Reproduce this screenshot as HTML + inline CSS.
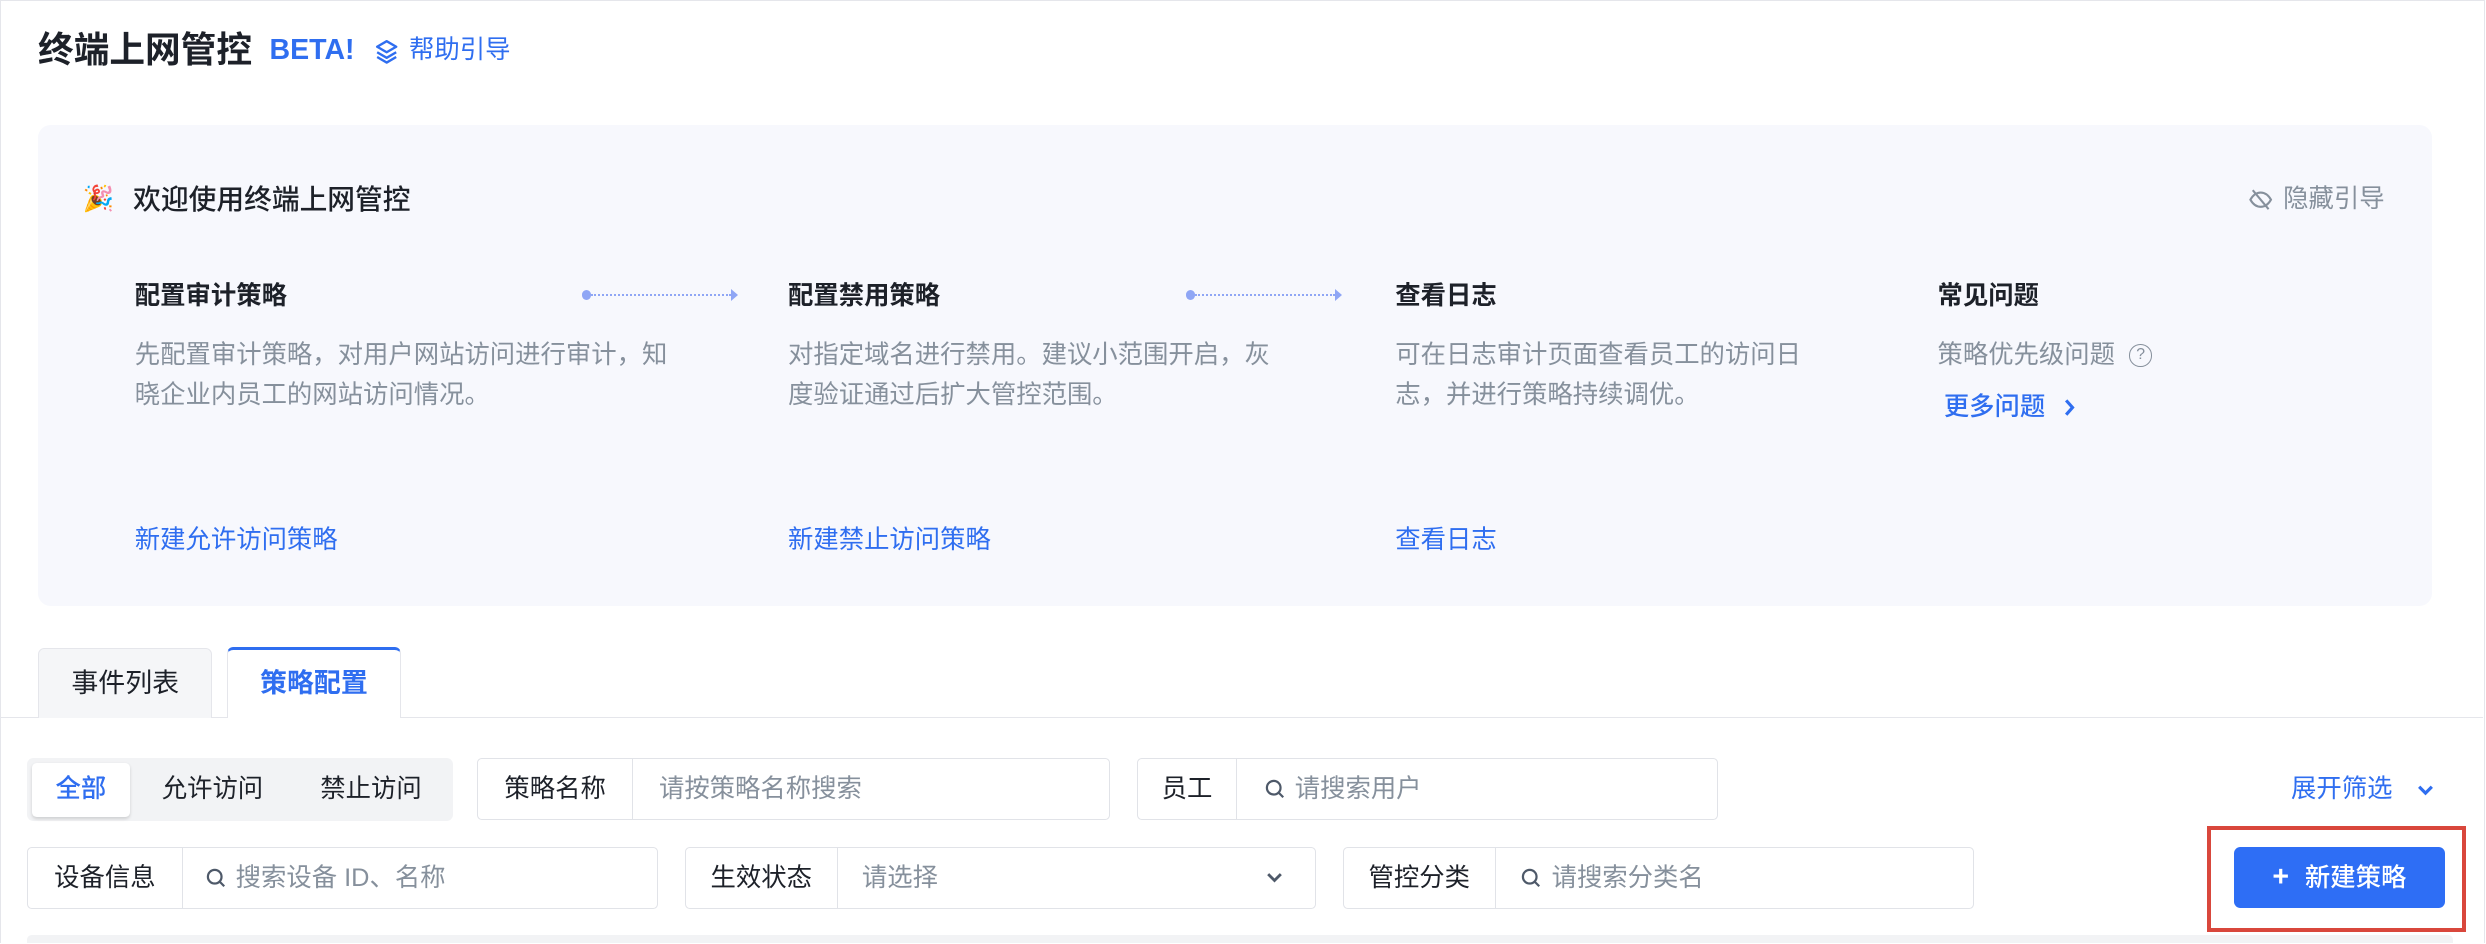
<!DOCTYPE html>
<html><head><meta charset="utf-8"><style>
html,body{margin:0;padding:0;background:#fff;}
body{width:2486px;height:944px;overflow:hidden;}
#r{zoom:1.5855;width:1568px;height:595px;position:relative;font-family:"Liberation Sans","Noto Sans CJK SC",sans-serif;color:#1d2129;}
.a{position:absolute;white-space:nowrap;line-height:20px;}
.blue{color:#2f6ef0;}
.gray{color:#86909c;}
.desc{font-size:16px;color:#86909c;line-height:25px;}
.h{font-size:16px;font-weight:bold;color:#1d2129;}
.lk{font-size:16px;color:#2f6ef0;}
.dot{position:absolute;height:0;border-top:1.5px dotted #8fa6f5;}
.box{position:absolute;border:1px solid #e1e3e8;border-radius:3px;background:#fff;height:38px;}
.box .l{position:absolute;left:0;top:0;height:38px;line-height:38px;font-size:16px;color:#1d2129;text-align:center;border-right:1px solid #e1e3e8;}
.box .p{position:absolute;top:0;height:38px;line-height:38px;font-size:16px;color:#86909c;white-space:nowrap;}
.box svg{vertical-align:-2px;margin-right:6px;}
</style></head><body><div id="r">
<div class="a" style="left:0;top:0;width:1566px;height:594px;border:1px solid #e5e6eb;border-bottom:none;"></div>
<div class="a" style="left:24px;top:19px;font-size:22.5px;line-height:26px;font-weight:bold;">终端上网管控</div>
<div class="a blue" style="left:170px;top:22px;font-size:18px;font-weight:bold;">BETA!</div>
<svg class="a" style="left:236px;top:24px" width="16" height="17" viewBox="0 0 16 17"><path d="M8 2 L14 5.5 L8 9 L2 5.5 Z M2 9 L8 12.5 L14 9 M2 12 L8 15.5 L14 12" fill="none" stroke="#2f6ef0" stroke-width="1.5" stroke-linejoin="round"/></svg>
<div class="a blue" style="left:258px;top:22px;font-size:16px;">帮助引导</div>

<div class="a" style="left:24px;top:79px;width:1510px;height:303px;background:#f7f8fd;border-radius:8px;"></div>
<div class="a" style="left:52px;top:116px;font-size:16px;">🎉</div>
<div class="a" style="left:84px;top:116px;font-size:17.5px;font-weight:500;">欢迎使用终端上网管控</div>
<svg class="a" style="left:1418px;top:118px" width="16" height="16" viewBox="0 0 16 16"><path d="M1.5 8 C3.5 4.5 6 3.5 8 3.5 C10 3.5 12.5 4.5 14.5 8 C12.5 11.5 10 12.5 8 12.5 C6 12.5 3.5 11.5 1.5 8 Z M3 2 L13 14" fill="none" stroke="#86909c" stroke-width="1.3"/></svg>
<div class="a gray" style="left:1440px;top:116px;font-size:16px;">隐藏引导</div>

<div class="a h" style="left:85px;top:177px;">配置审计策略</div>
<div class="a desc" style="left:85px;top:212px;">先配置审计策略，对用户网站访问进行审计，知<br>晓企业内员工的网站访问情况。</div>
<div class="a lk" style="left:85px;top:331px;">新建允许访问策略</div>
<div class="a" style="left:367px;top:183px;width:6px;height:6px;border-radius:3px;background:#8fa6f5;"></div>
<div class="dot" style="left:373px;top:185.5px;width:88px;"></div>
<div class="a" style="left:461px;top:182px;border-left:5px solid #8fa6f5;border-top:4px solid transparent;border-bottom:4px solid transparent;"></div>

<div class="a h" style="left:497px;top:177px;">配置禁用策略</div>
<div class="a desc" style="left:497px;top:212px;">对指定域名进行禁用。建议小范围开启，灰<br>度验证通过后扩大管控范围。</div>
<div class="a lk" style="left:497px;top:331px;">新建禁止访问策略</div>
<div class="a" style="left:748px;top:183px;width:6px;height:6px;border-radius:3px;background:#8fa6f5;"></div>
<div class="dot" style="left:754px;top:185.5px;width:88px;"></div>
<div class="a" style="left:842px;top:182px;border-left:5px solid #8fa6f5;border-top:4px solid transparent;border-bottom:4px solid transparent;"></div>

<div class="a h" style="left:880px;top:177px;">查看日志</div>
<div class="a desc" style="left:880px;top:212px;">可在日志审计页面查看员工的访问日<br>志，并进行策略持续调优。</div>
<div class="a lk" style="left:880px;top:331px;">查看日志</div>

<div class="a h" style="left:1222px;top:177px;">常见问题</div>
<div class="a desc" style="left:1222px;top:212px;">策略优先级问题</div>
<div class="a" style="left:1343px;top:217px;width:13px;height:13px;border:1.2px solid #86909c;border-radius:50%;font-size:10px;line-height:13px;text-align:center;color:#86909c;">?</div>
<div class="a lk" style="left:1226px;top:247px;font-weight:500;">更多问题</div>
<svg class="a" style="left:1301px;top:251px" width="8" height="12" viewBox="0 0 8 12"><path d="M2 1.5 L6 6 L2 10.5" fill="none" stroke="#2f6ef0" stroke-width="2"/></svg>

<div class="a" style="left:0;top:452px;width:1566px;height:1px;background:#e5e6eb;"></div>
<div class="a" style="left:24px;top:409px;width:110px;height:44px;background:#f5f6f8;border:1px solid #e5e6eb;border-bottom:none;border-radius:4px 4px 0 0;font-size:17px;line-height:44px;text-align:center;box-sizing:border-box;">事件列表</div>
<div class="a" style="left:143px;top:408px;width:110px;height:45px;background:#fff;border:1px solid #e5e6eb;border-top:2px solid #2f6ef0;border-bottom:none;border-radius:4px 4px 0 0;font-size:17px;line-height:42px;text-align:center;color:#2f6ef0;font-weight:bold;box-sizing:border-box;">策略配置</div>

<div class="a" style="left:17px;top:478px;width:269px;height:40px;background:#f2f3f5;border-radius:4px;"></div>
<div class="a" style="left:20px;top:481px;width:62px;height:34px;background:#fff;border-radius:3px;box-shadow:0 1px 2px rgba(0,0,0,.15);font-size:16px;line-height:34px;text-align:center;color:#2f6ef0;font-weight:500;">全部</div>
<div class="a" style="left:102px;top:488px;font-size:16px;">允许访问</div>
<div class="a" style="left:202px;top:488px;font-size:16px;">禁止访问</div>

<div class="box" style="left:301px;top:478px;width:398px;"><div class="l" style="width:97px;">策略名称</div><div class="p" style="left:114px;">请按策略名称搜索</div></div>
<div class="box" style="left:717px;top:478px;width:365px;"><div class="l" style="width:62px;">员工</div><div class="p" style="left:80px;"><svg width="13" height="13" viewBox="0 0 13 13"><circle cx="5.5" cy="5.5" r="4.3" fill="none" stroke="#4e5969" stroke-width="1.4"/><path d="M8.6 8.6 L11.5 11.5" stroke="#4e5969" stroke-width="1.4"/></svg>请搜索用户</div></div>
<div class="a blue" style="left:1445px;top:488px;font-size:16px;">展开筛选</div>
<svg class="a" style="left:1524px;top:493px" width="12" height="10" viewBox="0 0 12 10"><path d="M2 3 L6 7 L10 3" fill="none" stroke="#2f6ef0" stroke-width="2"/></svg>

<div class="box" style="left:17px;top:534px;width:397px;"><div class="l" style="width:97px;">设备信息</div><div class="p" style="left:112px;"><svg width="13" height="13" viewBox="0 0 13 13"><circle cx="5.5" cy="5.5" r="4.3" fill="none" stroke="#4e5969" stroke-width="1.4"/><path d="M8.6 8.6 L11.5 11.5" stroke="#4e5969" stroke-width="1.4"/></svg>搜索设备 ID、名称</div></div>
<div class="box" style="left:432px;top:534px;width:397px;"><div class="l" style="width:95px;">生效状态</div><div class="p" style="left:111px;">请选择</div>
<svg style="position:absolute;left:365px;top:15px" width="12" height="9" viewBox="0 0 12 9"><path d="M2 2 L6 6 L10 2" fill="none" stroke="#4e5969" stroke-width="1.8"/></svg></div>
<div class="box" style="left:847px;top:534px;width:397px;"><div class="l" style="width:95px;">管控分类</div><div class="p" style="left:112px;"><svg width="13" height="13" viewBox="0 0 13 13"><circle cx="5.5" cy="5.5" r="4.3" fill="none" stroke="#4e5969" stroke-width="1.4"/><path d="M8.6 8.6 L11.5 11.5" stroke="#4e5969" stroke-width="1.4"/></svg>请搜索分类名</div></div>

<div class="a" style="left:1392px;top:521px;width:158px;height:62px;border:3px solid #d9473c;"></div>
<div class="a" style="left:1409px;top:534px;width:133px;height:39px;background:#2e6ef5;border-radius:4px;color:#fff;font-size:16px;line-height:39px;text-align:center;font-weight:500;"><span style="font-size:18px;font-weight:bold;margin-right:10px;">+</span>新建策略</div>

<div class="a" style="left:17px;top:590px;width:1530px;height:5px;background:#f2f3f5;border-radius:3px 3px 0 0;"></div>
</div></body></html>
